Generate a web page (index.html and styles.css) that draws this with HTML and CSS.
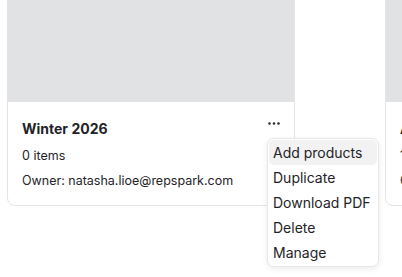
FILE: index.html
```html
<!DOCTYPE html>
<html>
<head>
<meta charset="utf-8">
<link rel="stylesheet" href="styles.css">
</head>
<body>
<div class="grid">
  <div class="card">
    <div class="thumb"></div>
    <div class="body">
      <div class="head">
        <div class="title">Winter 2026</div>
        <button class="more" aria-label="More"><svg width="12" height="3" viewBox="0 0 12 3"><circle cx="1.5" cy="1.5" r="1.3"/><circle cx="6" cy="1.5" r="1.3"/><circle cx="10.5" cy="1.5" r="1.3"/></svg></button>
      </div>
      <div class="meta">0 items</div>
      <div class="meta owner">Owner: natasha.lioe@repspark.com</div>
    </div>
    <ul class="menu">
      <li class="item active">Add products</li>
      <li class="item">Duplicate</li>
      <li class="item">Download PDF</li>
      <li class="item">Delete</li>
      <li class="item">Manage</li>
    </ul>
  </div>
  <div class="card">
    <div class="thumb"></div>
    <div class="body">
      <div class="head">
        <div class="title">Autumn 2025</div>
      </div>
      <div class="meta">12 items</div>
      <div class="meta owner">Owner: natasha.lioe@repspark.com</div>
    </div>
  </div>
</div>
</body>
</html>
```

FILE: styles.css
```css
html, body {
  margin: 0;
  padding: 0;
  background: #fff;
  height: 277px;
}
html {
  overflow: hidden;
}
body {
  font-family: Inter, "Liberation Sans", sans-serif;
  color: #1f2328;
}
.grid {
  display: flex;
  gap: 90px;
  padding-left: 7px;
  margin-top: -20px;
  height: 297px;
  align-items: flex-start;
}
.card {
  position: relative;
  flex: 0 0 288px;
  box-sizing: border-box;
  border: 1px solid #e3e4e6;
  border-radius: 8px;
  background: #fff;
}
.thumb {
  height: 121px;
  background: #e1e2e4;
  border-radius: 7px 7px 0 0;
}
.body {
  padding: 16px 14px 16px 14px;
}
.head {
  display: flex;
  justify-content: space-between;
  align-items: center;
  height: 20px;
}
.title {
  font-size: 14px;
  font-weight: 700;
  color: #1f2328;
}
.more {
  border: 0;
  background: none;
  padding: 0;
  margin-right: 0;
  margin-top: -9px;
  display: flex;
  fill: #2a2d33;
}
.meta {
  font-size: 12.5px;
  line-height: 16px;
  margin-top: 10px;
}
.owner {
  margin-top: 9px;
}
.menu {
  position: absolute;
  left: 259px;
  top: 157px;
  width: 108px;
  margin: 0;
  padding: 1px;
  list-style: none;
  background: #fff;
  border: 1px solid #e5e7eb;
  border-radius: 7px;
  box-shadow: 0 2px 6px rgba(0,0,0,0.08);
  z-index: 2;
}
.item {
  font-size: 14px;
  line-height: 25px;
  padding: 0 4px;
  border-radius: 5px;
  color: #1f2328;
  white-space: nowrap;
}
.item.active {
  background: #f2f2f3;
}
```
